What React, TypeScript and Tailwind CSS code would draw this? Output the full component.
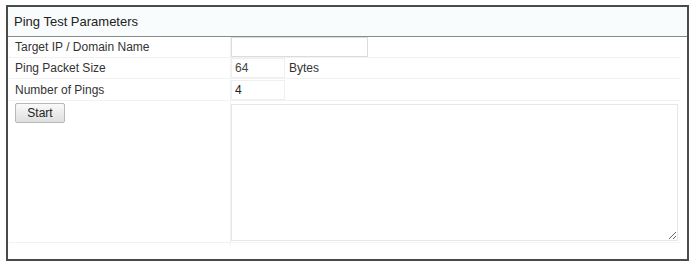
import React from 'react';

const App = () => {
  return (
    <div className="w-[690px] h-[262px] bg-white pt-[5px] pl-[6px]" style={{ fontFamily: '"Liberation Sans", Arial, sans-serif' }}>
      <div className="w-[683px] h-[256px] border-2 border-[#4a4a4a] flex flex-col">
        <div className="h-[30px] shrink-0 bg-[#f8fcfc] border-b border-[#8a8a8a] flex items-center pl-[6px] text-[13px] text-[#222]">
          Ping Test Parameters
        </div>
        <div className="pl-[1px] pr-[7px] text-[12px] text-[#333]">
          <div className="grid grid-cols-[222px_1fr] h-[21px] border-b border-[#f2f2f2]">
            <div className="flex items-center pl-[6px] border-r border-[#f2f2f2]">Target IP / Domain Name</div>
            <div className="flex items-center">
              <input className="w-[137px] h-[20px] border border-[#dcdcdc] outline-none px-1 text-[12px]" defaultValue="" />
            </div>
          </div>
          <div className="grid grid-cols-[222px_1fr] h-[21px] border-b border-[#f2f2f2]">
            <div className="flex items-center pl-[6px] border-r border-[#f2f2f2]">Ping Packet Size</div>
            <div className="flex items-center gap-[4px]">
              <input className="w-[54px] h-[20px] border border-[#efefef] outline-none px-[3px] text-[12px] text-[#444]" defaultValue="64" />
              <span>Bytes</span>
            </div>
          </div>
          <div className="grid grid-cols-[222px_1fr] h-[22px] border-b border-[#f2f2f2]">
            <div className="flex items-center pl-[6px] border-r border-[#f2f2f2]">Number of Pings</div>
            <div className="flex items-center">
              <input className="w-[54px] h-[20px] border border-[#efefef] outline-none px-[3px] text-[12px] text-[#222]" defaultValue="4" />
            </div>
          </div>
          <div className="grid grid-cols-[222px_1fr] h-[142px] border-b border-[#f2f2f2]">
            <div className="pl-[6px] pt-[2px] border-r border-[#f2f2f2]">
              <button className="w-[50px] h-[20px] border border-[#b8b8b8] rounded-[2px] bg-gradient-to-b from-[#fafafa] to-[#dedede] text-[12px] text-[#222]">
                Start
              </button>
            </div>
            <div className="pt-[3px]">
              <textarea className="w-[447px] h-[137px] border border-[#e6e6e6] outline-none resize" />
            </div>
          </div>
        </div>
      </div>
    </div>
  );
};

export default App;
